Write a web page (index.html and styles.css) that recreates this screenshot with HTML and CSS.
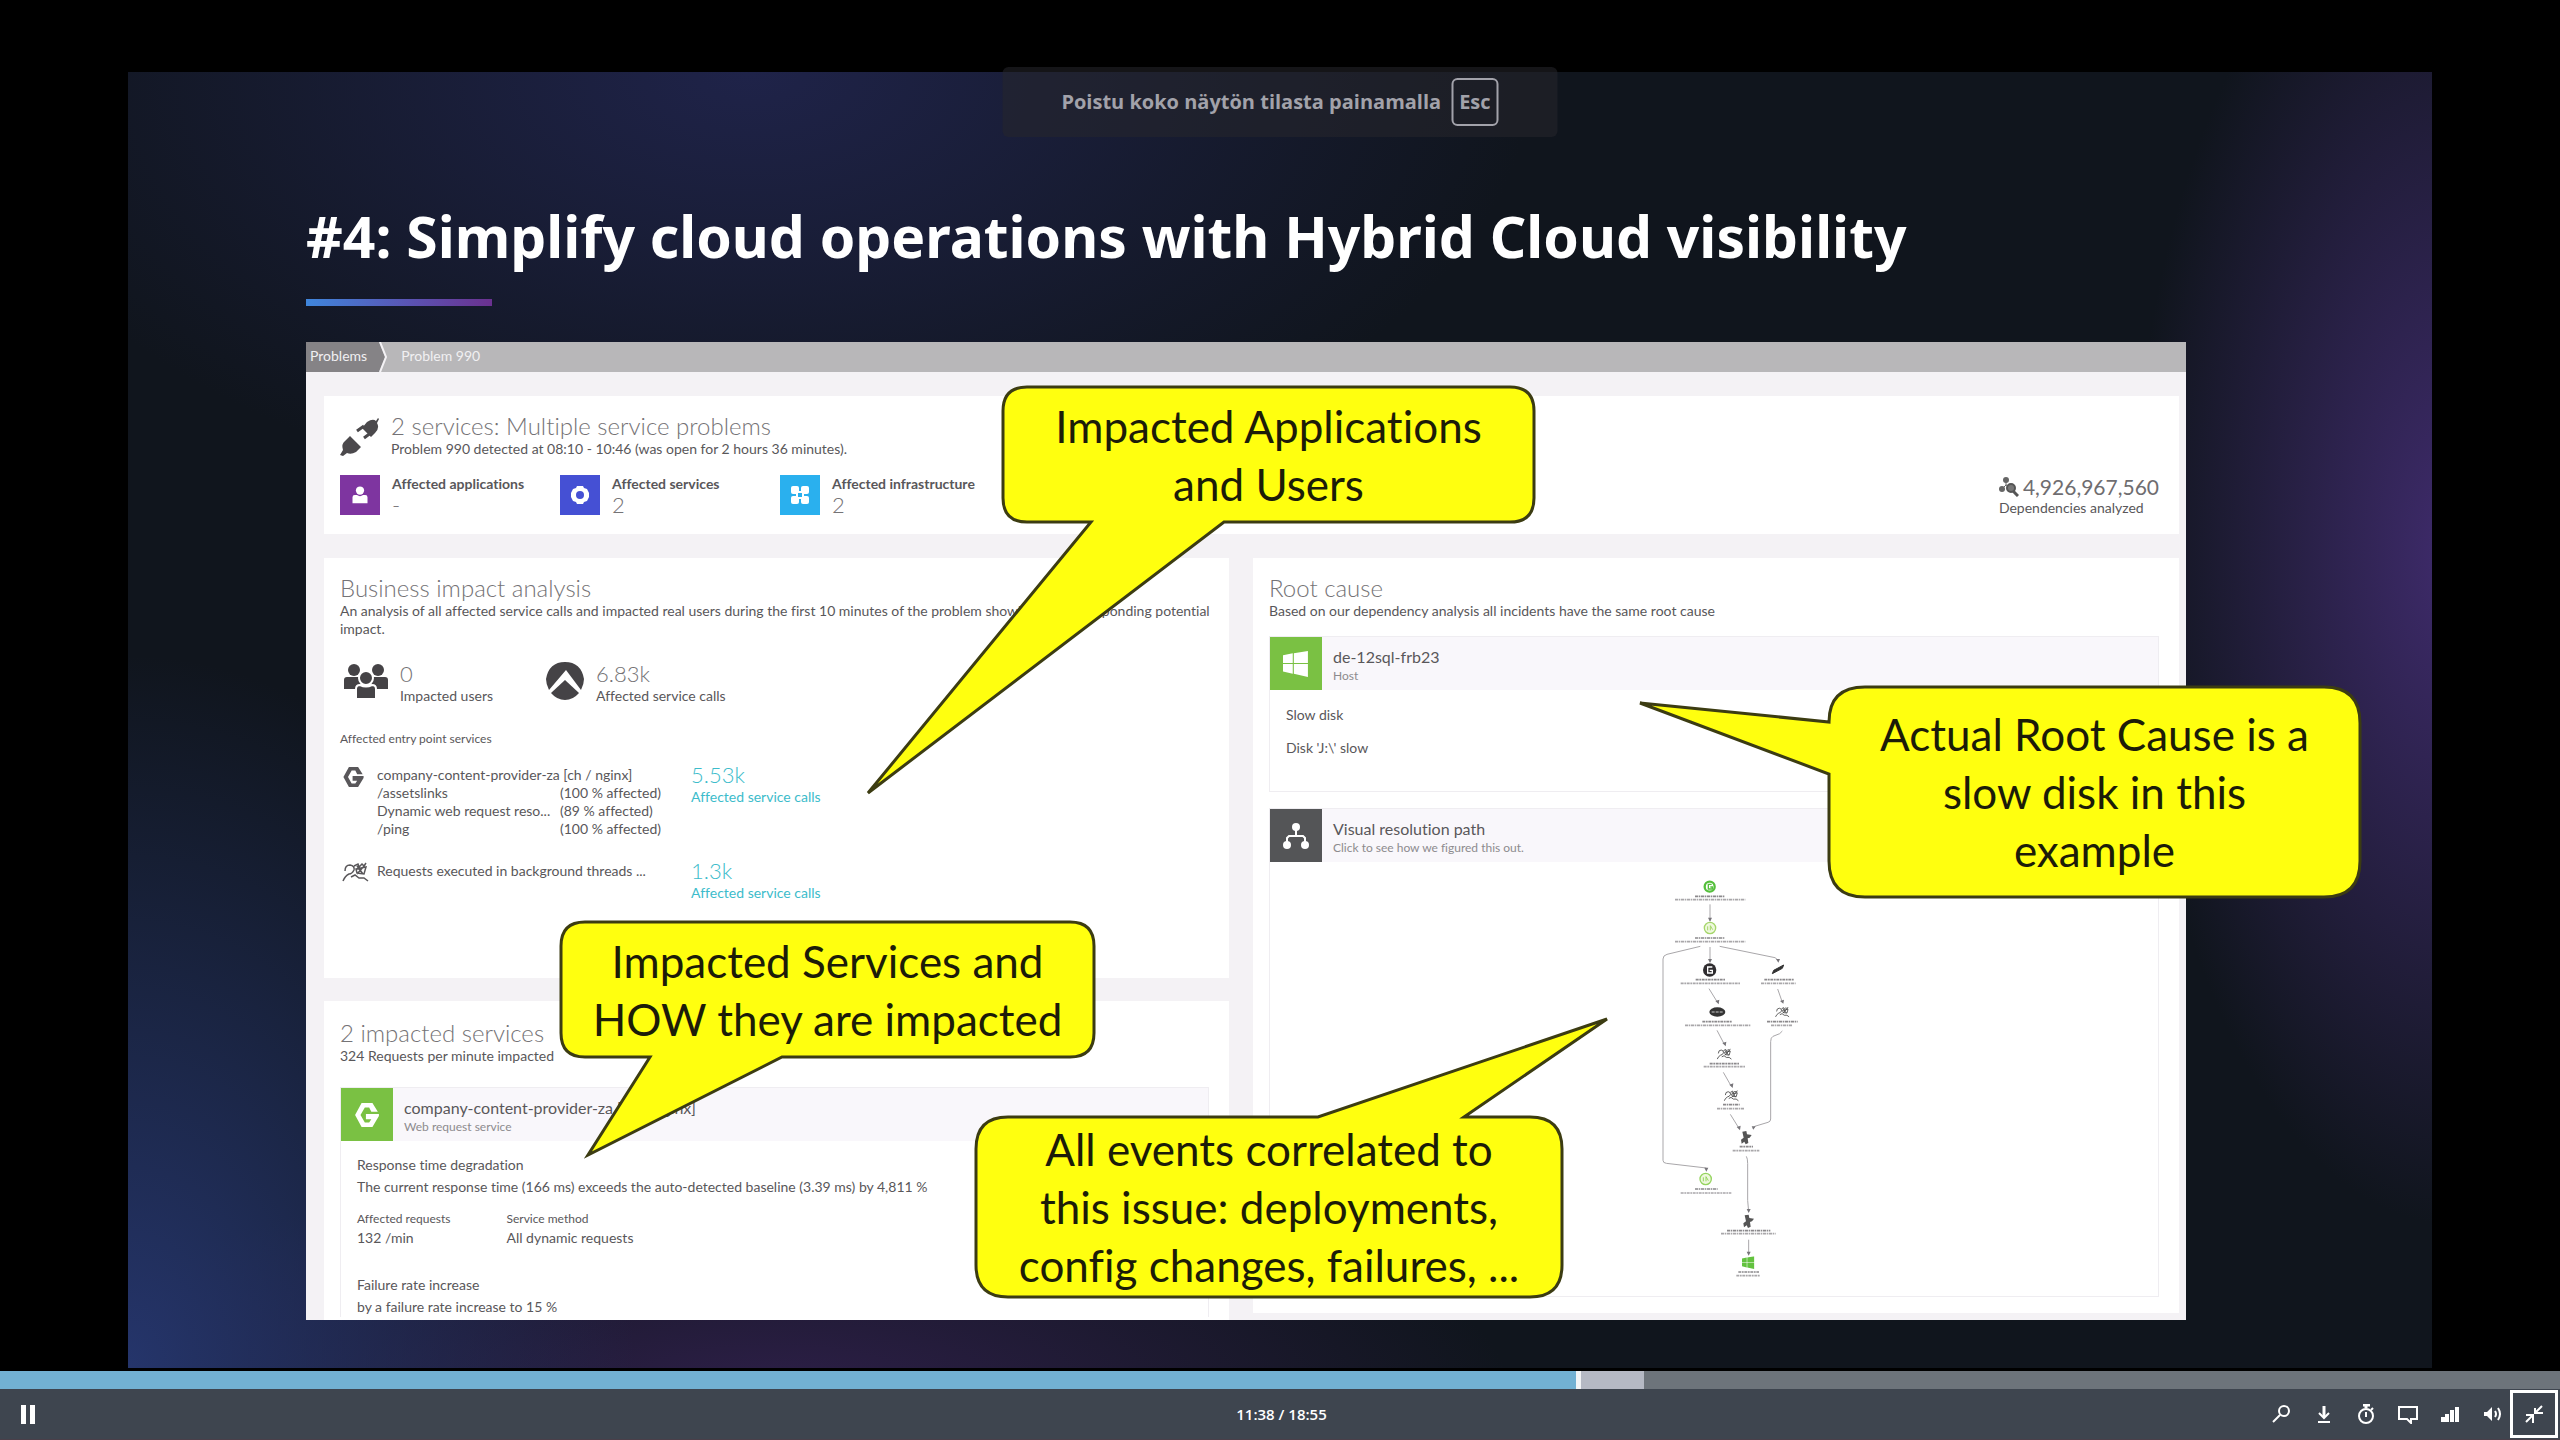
FILE: index.html
```html
<!DOCTYPE html>
<html lang="fi">
<head>
<meta charset="utf-8">
<title>#4: Simplify cloud operations with Hybrid Cloud visibility</title>
<link rel="stylesheet" href="styles.css">
</head>
<body>
<svg class="defs" aria-hidden="true">
  <symbol id="gear-g" viewBox="0 0 24 24"><path fill="currentColor" d="M7 1h10l5 8h-6l-2-4h-4L6 12l4 7h4l2-3h-5v-5h12v2l-6 10H7L1 12z"/></symbol>
  <symbol id="windows" viewBox="0 0 24 24"><path fill="currentColor" d="M0 4l9-2v9H0zM10 2l13-2v11H10zM0 12h9v9l-9-2zM10 12h13v12l-13-3z"/></symbol>
  <symbol id="person" viewBox="0 0 24 24"><circle fill="currentColor" cx="12" cy="6" r="5.500"/><path fill="currentColor" d="M2 23v-8q0-3 3-3h3q4 3 8 0h3q3 0 3 3v8z"/></symbol>
  <symbol id="threads" viewBox="0 0 27 20"><g fill="none" stroke="currentColor" stroke-width="1.500"><path d="M3 9q0-6 5-6 5 1 4 5-2 4-5 4-4 2-6 7M9 15l4-2 4 3h5l4 3M12 4l4-2 1 3 3-3 2 2 2-3M14 7l10-2-2 7-7-1zM15 4l6 8M23 3l-8 9"/></g></symbol>
</svg>

<main class="stage">
  <article class="slide">
    <h1 class="slide-title">#4: Simplify cloud operations with Hybrid Cloud visibility</h1>
    <div class="slide-rule"></div>

    <section class="panel">
      <nav class="crumbs">
        <a class="crumb crumb-first" href="#problems">Problems</a>
        <svg class="crumb-arrow" viewBox="0 0 10 30" preserveAspectRatio="none"><path d="M0 0l6 15-6 15z" fill="#858386"/><path d="M1 0l6 15-6 15" fill="none" stroke="#f4f2f5" stroke-width="2"/></svg>
        <a class="crumb" href="#problem-990">Problem 990</a>
      </nav>

      <div class="panel-body">
        <section class="card summary">
          <div>
            <header class="summary-head">
              <svg class="plug" viewBox="0 0 39 38"><g fill="#4b494c"><path d="M22 10l5-6q6-4 9-1l2-3 1 1-2 4q3 5-2 10l-4 4z"/><path d="M24 8l-7 5M32 14l-8 6" stroke="#4b494c" stroke-width="3"/><path d="M10 18l11 11-5 5q-5 3-9 1l-4 3-3-1 3-5q-2-6 2-9z"/></g></svg>
              <div>
                <h2 class="heading">2 services: Multiple service problems</h2>
                <p class="sub">Problem 990 detected at 08:10 - 10:46 (was open for 2 hours 36 minutes).</p>
              </div>
            </header>
            <div class="tiles">
              <div class="tile"><span class="tile-icon purple"><svg width="18" height="20"><use href="#person"/></svg></span><div><p class="tile-label">Affected applications</p><p class="tile-value">-</p></div></div>
              <div class="tile"><span class="tile-icon blue"><svg width="20" height="20" viewBox="0 0 20 20"><path d="M7 1h6l1 2 3 1 2 4v4l-2 4-3 1-1 2H7l-1-2-3-1-2-4V8l2-4 3-1z" fill="#fff"/><circle cx="10" cy="10" r="4" fill="#4550d4"/></svg></span><div><p class="tile-label">Affected services</p><p class="tile-value">2</p></div></div>
              <div class="tile"><span class="tile-icon cyan"><svg width="20" height="20" viewBox="0 0 20 20" fill="#fff"><rect x="1" y="1" width="8" height="8" rx="2"/><rect x="11" y="1" width="8" height="8" rx="2"/><rect x="1" y="11" width="8" height="8" rx="2"/><rect x="11" y="11" width="8" height="8" rx="2"/><path d="M6 6h8v8H6z"/><path d="M8 8h4v4H8z" fill="#2ab0ee"/></svg></span><div><p class="tile-label">Affected infrastructure</p><p class="tile-value">2</p></div></div>
            </div>
          </div>
          <div class="dependencies">
            <p class="dep-number"><svg width="20" height="20" viewBox="0 0 20 20" fill="#666"><circle cx="7" cy="3" r="3"/><circle cx="3" cy="12" r="3"/><path d="M7 3v5l-4 4M7 8l5 2" stroke="#666" fill="none"/><circle cx="12" cy="11" r="4" fill="#777" stroke="#555" stroke-width="2"/><path d="M14 14l5 5" stroke="#555" stroke-width="3"/></svg>4,926,967,560</p>
            <p class="dep-label">Dependencies analyzed</p>
          </div>
        </section>

        <div class="columns">
          <div class="column">
            <section class="card business">
              <h2 class="heading">Business impact analysis</h2>
              <p class="sub">An analysis of all affected service calls and impacted real users during the first 10 minutes of the problem showing the corresponding potential impact.</p>
              <div class="metrics">
                <div class="metric">
                  <svg width="44" height="38" viewBox="0 0 44 38" fill="#454346"><circle cx="10" cy="8" r="6"/><circle cx="34" cy="8" r="6"/><path d="M0 27V18q0-3 3-3h14v12zM44 27V18q0-3-3-3H27v12z"/><g stroke="#fff" stroke-width="2"><circle cx="22" cy="16" r="7"/><path d="M12 37V27q0-4 4-4 6 3 12 0 4 0 4 4v10z"/></g></svg>
                  <div><p class="metric-value">0</p><p class="metric-label">Impacted users</p></div>
                </div>
                <div class="metric">
                  <svg width="38" height="38" viewBox="0 0 38 38" fill="#454346"><path d="M3 28Q0 22 0 17 3 0 19 0t19 17q0 5-3 11L20 8z"/><path d="M19 18l14 13q-6 7-14 7T5 31z"/></svg>
                  <div><p class="metric-value">6.83k</p><p class="metric-label">Affected service calls</p></div>
                </div>
              </div>
              <h3 class="minor">Affected entry point services</h3>
              <div class="entry">
                <svg class="entry-icon" width="23" height="22"><use href="#gear-g"/></svg>
                <div class="entry-text">
                  <p>company-content-provider-za [ch / nginx]</p>
                  <p class="pair"><span>/assetslinks</span><span>(100 % affected)</span></p>
                  <p class="pair"><span>Dynamic web request reso...</span><span>(89 % affected)</span></p>
                  <p class="pair"><span>/ping</span><span>(100 % affected)</span></p>
                </div>
                <a class="calls" href="#calls"><span class="metric-value">5.53k</span><span class="calls-label">Affected service calls</span></a>
              </div>
              <div class="entry">
                <svg class="entry-icon" width="27" height="20"><use href="#threads"/></svg>
                <div class="entry-text"><p>Requests executed in background threads ...</p></div>
                <a class="calls" href="#background-calls"><span class="metric-value">1.3k</span><span class="calls-label">Affected service calls</span></a>
              </div>
            </section>

            <section class="card impacted">
              <h2 class="heading">2 impacted services</h2>
              <p class="sub">324 Requests per minute impacted</p>
              <div class="box box-open">
                <header class="box-head"><span class="box-icon green"><svg width="26" height="26"><use href="#gear-g"/></svg></span><div><h3 class="box-title">company-content-provider-za [ch / nginx]</h3><p class="box-sub">Web request service</p></div></header>
                <div class="box-body">
                  <p class="line-strong">Response time degradation</p>
                  <p class="line">The current response time (166 ms) exceeds the auto-detected baseline (3.39 ms) by 4,811 %</p>
                  <dl class="facts">
                    <div><dt>Affected requests</dt><dd>132 /min</dd></div>
                    <div><dt>Service method</dt><dd>All dynamic requests</dd></div>
                  </dl>
                  <p class="line-strong">Failure rate increase</p>
                  <p class="line">by a failure rate increase to 15 %</p>
                </div>
              </div>
            </section>
          </div>

          <section class="card root">
            <h2 class="heading">Root cause</h2>
            <p class="sub">Based on our dependency analysis all incidents have the same root cause</p>
            <div class="box box-host">
              <header class="box-head"><span class="box-icon green"><svg width="26" height="26"><use href="#windows"/></svg></span><div><h3 class="box-title">de-12sql-frb23</h3><p class="box-sub">Host</p></div></header>
              <div class="box-body host-body">
                <p>Slow disk</p>
                <p>Disk 'J:\' slow</p>
              </div>
            </div>
            <div class="box box-path">
              <header class="box-head"><span class="box-icon grey"><svg width="26" height="26" viewBox="0 0 26 26" fill="#fff"><circle cx="13" cy="4" r="4"/><circle cx="4" cy="22" r="4"/><circle cx="22" cy="22" r="4"/><path d="M13 4v9M4 22v-7l2-2h14l2 2v7" fill="none" stroke="#fff" stroke-width="2"/></svg></span><div><h3 class="box-title">Visual resolution path</h3><p class="box-sub">Click to see how we figured this out.</p></div></header>
              <svg class="graph" viewBox="0 3 690 1302">
                <g fill="none" stroke="#a9a7aa" stroke-width="3">
                  <path d="M333 130v50M333 258v44M330 383l26 42M354 508l22 42M373 634l24 42M394 760l26 42M304 256l-100 24q-12 3-12 14v604q0 8 10 9l120 14M362 256l166 34 10 8M536 384l14 40M550 510l-8 8-20 8q-7 3-7 16v232q0 8-8 10l-40 12-5 8M442 886q4 6 4 22v110l3 34M449 1136v44"/>
                </g>
                <g fill="#77757a"><path d="M327 170h12l-6 12zM327 294h12l-6 12zM349 420l12-4-2 14zM370 546l12-4-2 14zM391 671l12-4-2 14zM413 798l12-4-2 14zM531 294h12l-5 11zM543 420l12-4-2 12zM458 796h12l-7 10zM316 920h12l-6 12zM443 1044h12l-6 12zM443 1172h12l-6 12z"/></g>
                <g fill="none" stroke="#8b898c" stroke-width="5" stroke-dasharray="9 2 5 2">
                  <path d="M288 106h90M288 231h90M290 356h88M496 356h88M310 482h90M504 482h92M332 608h88M372 731h50M422 857h40M288 984h68M384 1109h130M418 1233h62"/>
                  <path d="M228 116h211M228 242h211M245 367h178M486 367h104M258 493h198M516 493h64M314 617h124M354 743h82M401 869h80M245 996h152M366 1118h164M412 1244h72" stroke="#a9a7aa"/>
                </g>
                <circle cx="332" cy="77" r="15" fill="#fff" stroke="#55bf3c" stroke-width="7"/><path d="M338 70h-10v14h12v-6h-6" fill="none" stroke="#55bf3c" stroke-width="4"/>
                <circle cx="333" cy="201" r="17" fill="#eef8dd" stroke="#a5d66b" stroke-width="4"/><path d="M326 208v-12M334 208v-14l7 12" fill="none" stroke="#a5d66b" stroke-width="3"/>
                <circle cx="320" cy="954" r="17" fill="#eef8dd" stroke="#95d45f" stroke-width="4"/><path d="M313 961v-12M321 961v-14l7 12" fill="none" stroke="#95d45f" stroke-width="3"/>
                <circle cx="332" cy="327" r="20" fill="#2f2d30"/><path d="M340 318h-14v18h14v-8h-8" fill="none" stroke="#fff" stroke-width="4"/>
                <path d="M520 338l4-10 30-16-4 10z" fill="#333" stroke="#333" stroke-width="3"/>
                <ellipse cx="355" cy="453" rx="24" ry="14" fill="#333"/><path d="M338 453h34" stroke="#999" stroke-width="5" stroke-dasharray="9 3"/>
                <g color="#444"><use href="#threads" x="528" y="434" width="44" height="38"/><use href="#threads" x="353" y="560" width="46" height="38"/><use href="#threads" x="374" y="685" width="46" height="38"/></g>
                <g fill="#555"><path id="host-node" d="M430 812l12-2 2 10 14 2-6 8-6 2 2 14-8 4-4-8-8 6-2-12 8-6z"/><use href="#host-node" x="7" y="251"/></g>
                <g color="#63c23f"><use href="#windows" x="428" y="1186" width="40" height="38"/></g>
              </svg>
            </div>
          </section>
        </div>
      </div>
    </section>

    <aside class="callout callout-users"><svg viewBox="0 0 533 137"><path d="M25 1H508Q532 1 532 25V112Q532 136 508 136H222L-134 407 89 136H25Q1 136 1 112V25Q1 1 25 1Z"/></svg><p>Impacted Applications<br>and Users</p></aside>
    <aside class="callout callout-services"><svg viewBox="0 0 535 137"><path d="M25 1H510Q534 1 534 25V112Q534 136 510 136H222L28 234 90 136H25Q1 136 1 112V25Q1 1 25 1Z"/></svg><p>Impacted Services and<br>HOW they are impacted</p></aside>
    <aside class="callout callout-events"><svg viewBox="0 0 588 182"><path d="M33 1H343L632-97 489 1H555Q587 1 587 33V149Q587 181 555 181H33Q1 181 1 149V33Q1 1 33 1Z"/></svg><p>All events correlated to<br>this issue: deployments,<br>config changes, failures, ...</p></aside>
    <aside class="callout callout-cause"><svg viewBox="0 0 533 212"><path d="M37 1H496Q532 1 532 37V175Q532 211 496 211H37Q1 211 1 175V88L-188 17 1 36Q1 1 37 1Z"/></svg><p>Actual Root Cause is a<br>slow disk in this<br>example</p></aside>
  </article>

  <div class="toast">Poistu koko näytön tilasta painamalla <kbd>Esc</kbd></div>
</main>

<footer class="player">
  <input class="seek" type="range" min="0" max="1135" value="700" aria-label="Toistokohta">
  <div class="controls">
    <div class="side"><button class="ctl ctl-pause" aria-label="Tauko"><svg width="14" height="19"><path d="M0 0h5v19H0zM9 0h5v19H9z" fill="#fff"/></svg></button></div>
    <p class="time">11:38 / 18:55</p>
    <div class="side side-right">
      <button class="ctl" aria-label="Haku"><svg viewBox="0 0 20 20"><circle cx="12" cy="7" r="5"/><path d="M8 11l-7 7"/></svg></button>
      <button class="ctl" aria-label="Lataa"><svg viewBox="0 0 20 20"><path d="M10 2v11M5 9l5 5 5-5M4 18h12" stroke-width="2"/><path d="M10 2v10" stroke-width="3"/></svg></button>
      <button class="ctl" aria-label="Nopeus"><svg viewBox="0 0 20 20"><circle cx="10" cy="12" r="7"/><path d="M10 8v5M15 6l2-2"/><path d="M7 1h7M10 1v3" stroke-width="3"/></svg></button>
      <button class="ctl" aria-label="Tekstitys"><svg viewBox="0 0 20 20"><path d="M1 3h18v12h-6v4l-4-4H1z"/></svg></button>
      <button class="ctl" aria-label="Laatu"><svg viewBox="0 0 20 20"><path d="M3 18v-5M7 18v-8M12 18V6M17 18V3" stroke-width="4"/></svg></button>
      <button class="ctl" aria-label="Ääni"><svg viewBox="0 0 20 20"><path d="M2 8h3l5-5v14l-5-5H2z" fill="#fff" stroke="none"/><path d="M13 7q2 3 0 6M16 4q4 6 0 12"/></svg></button>
      <button class="ctl ctl-active" aria-label="Poistu koko näytöstä"><svg viewBox="0 0 20 20"><path d="M18 2l-7 7M11 4v5h8M2 18l7-7M2 11h7v8"/></svg></button>
    </div>
  </div>
</footer>
</body>
</html>
```
FILE: styles.css
```css
* { box-sizing: border-box; margin: 0; padding: 0; }

body {
  display: flex;
  flex-direction: column;
  min-height: 100vh;
  background: #000;
  color: #59575a;
  font-family: Lato, "Open Sans", sans-serif;
  font-size: 14px;
  line-height: 18px;
  font-variant-ligatures: none;
}

h1, h2, h3 { font-weight: 400; }
a { color: inherit; text-decoration: none; }
button { border: 0; background: none; cursor: pointer; }
svg { flex: none; }
.defs { position: absolute; width: 0; height: 0; }

/* Slide */
.stage {
  position: relative;
  flex: 1;
  display: flex;
  align-items: flex-start;
  justify-content: center;
  padding-top: 72px;
}
.slide {
  position: relative;
  display: flex;
  flex-direction: column;
  width: 90%;
  aspect-ratio: 16 / 9;
  padding: 128px 246px 48px 178px;
  background:
    radial-gradient(ellipse 14% 52% at 101% 37%, #3f2b6c, transparent),
    radial-gradient(ellipse 34% 34% at 27% 0%, #1f2349, transparent),
    radial-gradient(ellipse 22% 55% at 0% 100%, #25356b, transparent),
    radial-gradient(ellipse 32% 18% at 28% 102%, #2d1f48, transparent),
    #10151d;
}
.slide-title {
  color: #fff;
  font: 700 57px/72px "Noto Sans", sans-serif;
  white-space: nowrap;
}
.slide-rule {
  width: 186px;
  height: 7px;
  margin: 27px 0 36px;
  background: linear-gradient(90deg, #3f86dc, #5a54b4 55%, #6b3190);
}

/* Dashboard */
.panel {
  flex: 1;
  display: flex;
  flex-direction: column;
  background: #f4f2f5;
}
.crumbs {
  display: flex;
  height: 30px;
  background: #b8b7b9;
  color: #f1f0f2;
  line-height: 28px;
}
.crumb-first { padding: 0 12px 0 4px; background: #858386; }
.crumb-arrow { width: 10px; height: 30px; margin-right: 12px; }
.panel-body {
  flex: 1;
  display: flex;
  flex-direction: column;
  gap: 24px;
  padding: 24px 7px 0 18px;
}
.card { padding: 16px; background: #fff; }
.heading { color: #757376; font-size: 24px; font-weight: 300; line-height: 28px; }
.sub { line-height: 18px; }

.summary { display: flex; justify-content: space-between; min-height: 138px; padding-right: 20px; }
.summary-head { display: flex; gap: 12px; }
.plug { width: 39px; height: 38px; margin-top: 6px; }
.tiles { display: grid; grid-template-columns: repeat(3, 220px); margin-top: 17px; }
.tile { display: flex; gap: 12px; }
.tile-icon { display: grid; place-items: center; width: 40px; height: 40px; color: #fff; }
.tile-label { font-weight: 700; white-space: nowrap; }
.tile-value { color: #757376; font-size: 22px; font-weight: 300; line-height: 24px; }
.purple { background: #7e35a0; }
.blue { background: #4550d4; }
.cyan { background: #2ab0ee; }
.green { background: #7ac143; }
.grey { background: #545557; }
.dependencies { margin-top: 62px; }
.dep-number { display: flex; align-items: center; gap: 4px; color: #6f6d70; font-size: 21px; line-height: 26px; }
.dep-label { line-height: 16px; }

.columns { flex: 1; display: grid; grid-template-columns: 905px 1fr; gap: 24px; }
.column { display: flex; flex-direction: column; gap: 23px; }
.business { min-height: 420px; }
.metrics { display: grid; grid-template-columns: 202px 1fr; margin-top: 24px; }
.metric { display: flex; gap: 12px; padding-left: 4px; }
.metric-value { color: #757376; font-size: 22px; font-weight: 300; line-height: 24px; }
.metric-label { line-height: 20px; }
.minor { margin: 24px 0 18px; font-size: 12px; }
.entry { display: grid; grid-template-columns: 37px 314px 1fr; min-height: 96px; }
.entry-icon { margin-left: 2px; }
.pair { display: grid; grid-template-columns: 183px 1fr; }
.calls { display: flex; flex-direction: column; color: #3cbccb; }
.calls .metric-value { color: #3cbccb; line-height: 18px; }
.calls-label { line-height: 26px; }

.impacted { flex: 1; padding: 18px 16px 0; }
.box { border: 1px solid #efedf1; margin-right: 4px; }
.box-open { margin: 22px 4px 0 0; border-bottom: 0; }
.box-head { display: flex; gap: 11px; background: #f9f7fb; }
.box-icon { display: grid; place-items: center; width: 52px; height: 53px; color: #fff; }
.box-title { padding-top: 9px; font-size: 16px; line-height: 22px; }
.box-sub { color: #8d8b8e; font-size: 12px; line-height: 16px; }
.box-body { padding: 12px 16px 0; }
.line-strong { line-height: 24px; }
.line { line-height: 20px; }
.facts { display: flex; gap: 56px; margin: 12px 0 26px; }
.facts dt { font-size: 12px; line-height: 20px; }
.facts dd { line-height: 18px; }

.root { margin-bottom: 7px; }
.box-host { min-height: 156px; margin-top: 16px; }
.host-body { display: grid; gap: 15px; padding-top: 16px; }
.box-path { margin-top: 16px; }
.graph { display: block; width: 230px; height: 434px; margin: 0 auto; }

/* Callouts float over the slide */
.callout {
  position: absolute;
  display: grid;
  place-items: center;
  color: #1c1c08;
  font-size: 44px;
  line-height: 58px;
  text-align: center;
  white-space: nowrap;
}
.callout svg { position: absolute; inset: 0; width: 100%; height: 100%; overflow: visible; }
.callout path { fill: #ffff0f; stroke: #3c3c12; stroke-width: 3; }
.callout p { position: relative; }
.callout-users { left: 874px; top: 314px; width: 533px; height: 137px; }
.callout-services { left: 432px; top: 849px; width: 535px; height: 137px; }
.callout-events { left: 847px; top: 1044px; width: 588px; height: 182px; }
.callout-cause { left: 1700px; top: 614px; width: 533px; height: 212px; }

/* Full-screen hint */
.toast {
  position: absolute;
  top: 67px;
  left: 50%;
  transform: translateX(-50%);
  display: flex;
  align-items: center;
  justify-content: center;
  gap: 10px;
  width: 555px;
  height: 70px;
  border-radius: 6px;
  background: rgba(38, 39, 43, 0.55);
  color: #a2a2aa;
  font: 700 20px/28px "Open Sans", sans-serif;
}
.toast kbd {
  padding: 8px 6px;
  border: 2px solid #a2a2aa;
  border-radius: 6px;
  font: inherit;
}

/* Player bar */
.player { background: #3e454f; border-bottom: 1px solid #4a3f49; }
.seek {
  display: block;
  appearance: none;
  width: 100%;
  height: 18px;
  background: linear-gradient(90deg, #72b1d3 61.6%, #b5b9c4 61.6%, #b5b9c4 64.2%, #6d747b 64.2%);
}
.seek::-webkit-slider-thumb { appearance: none; width: 5px; height: 18px; background: #f2f4f6; }
.controls { display: flex; align-items: center; height: 50px; }
.side { flex: 1; display: flex; }
.side-right { justify-content: flex-end; padding-right: 5px; }
.time { padding-left: 8px; color: #fff; font: 600 15px/20px "Open Sans", sans-serif; }
.ctl { display: grid; place-items: center; width: 42px; height: 42px; }
.ctl-pause { width: 56px; }
.side-right .ctl svg { width: 20px; height: 20px; fill: none; stroke: #fff; stroke-width: 2; }
.ctl-active { outline: 3px solid #fff; }
.side-right .ctl-active svg { stroke-width: 2; }
```
